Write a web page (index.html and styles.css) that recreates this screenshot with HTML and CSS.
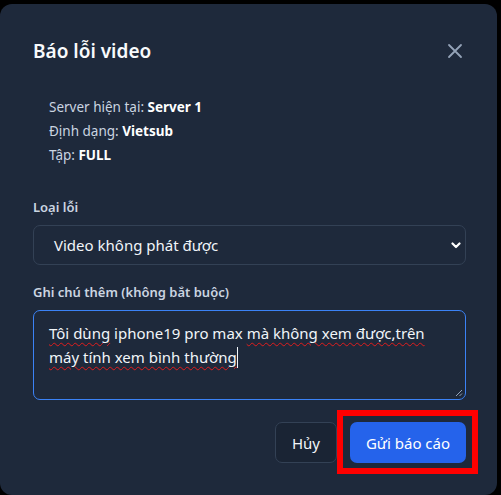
FILE: index.html
```html
<!DOCTYPE html>
<html>
<head>
	<meta charset="UTF-8">
	<title>Báo lỗi video</title>
	<link rel="stylesheet" href="styles.css">
</head>
<body>

<div class="modal">
	<div class="modal-head">
		<h2>Báo lỗi video</h2>
		<button class="close" type="button">
			<svg width="16" height="16" viewBox="0 0 16 16"><path d="M2 2 L14 14 M14 2 L2 14" stroke="#94a3b8" stroke-width="1.8" stroke-linecap="round"/></svg>
		</button>
	</div>

	<div class="info">
		<p>Server hiện tại: <b>Server 1</b></p>
		<p>Định dạng: <b>Vietsub</b></p>
		<p>Tập: <b>FULL</b></p>
	</div>

	<label class="field-label">Loại lỗi</label>
	<div class="select">
		<span>Video không phát được</span>
		<svg width="10" height="7" viewBox="0 0 10 7"><path d="M1.5 1.5 L5 5 L8.5 1.5" fill="none" stroke="#ffffff" stroke-width="2.2" stroke-linecap="round" stroke-linejoin="round"/></svg>
	</div>

	<label class="field-label second">Ghi chú thêm (không bắt buộc)</label>
	<div class="note-wrap">
		<div class="note"><span class="typo">Tôi dùng</span> iphone19 pro max <span class="typo">mà không xem được,trên</span> <span class="typo">máy tính xem bình thường</span><span class="caret"></span></div>
		<svg class="grip" width="8" height="8" viewBox="0 0 8 8"><path d="M7 1 L1 7 M7 4.5 L4.5 7" stroke="#94a3b8" stroke-width="1"/></svg>
	</div>

	<div class="actions">
		<button class="btn cancel" type="button">Hủy</button>
		<div class="mark">
			<button class="btn send" type="button">Gửi báo cáo</button>
		</div>
	</div>
</div>

</body>
</html>
```

FILE: styles.css
```css
body {
	margin: 0;
	background-color: #000000;
	font-family: "Noto Sans", "Open Sans", sans-serif;
	color: #e2e8f0;
}
.modal {
	width: 497px;
	height: 491px;
	box-sizing: border-box;
	margin-top: 4px;
	padding: 33px 31px 0 33px;
	background-color: #1e293b;
	border-radius: 12px;
}
.modal-head {
	display: flex;
	justify-content: space-between;
	align-items: center;
	height: 28px;
}
.modal-head h2 {
	margin: 0;
	font-size: 19px;
	font-weight: 600;
	line-height: 28px;
	color: #f8fafc;
}
.close {
	background: none;
	border: none;
	padding: 0;
	margin-right: 3px;
	width: 16px;
	height: 16px;
	cursor: pointer;
}
.info {
	margin-top: 30px;
	padding-left: 16px;
	font-size: 13.5px;
	color: #cbd5e1;
}
.info p {
	margin: 0;
	line-height: 24px;
}
.info b {
	color: #ffffff;
	font-weight: 700;
}
.field-label {
	display: block;
	margin-top: 30px;
	font-size: 13px;
	font-weight: 600;
	line-height: 20px;
	color: #cbd5e1;
}
.field-label.second {
	margin-top: 17px;
}
.select {
	margin-top: 8px;
	height: 40px;
	box-sizing: border-box;
	border: 1px solid #334155;
	border-radius: 7px;
	padding: 0 4px 0 20px;
	display: flex;
	align-items: center;
	justify-content: space-between;
	font-size: 15px;
	color: #f1f5f9;
}
.note-wrap {
	position: relative;
	margin-top: 8px;
}
.note {
	height: 90px;
	box-sizing: border-box;
	border: 1px solid #3b82f6;
	border-radius: 7px;
	padding: 10px 15px;
	font-size: 15px;
	line-height: 24px;
	color: #f1f5f9;
	overflow: hidden;
}
.grip {
	position: absolute;
	right: 3px;
	bottom: 3px;
}
.typo {
	text-decoration: underline wavy #e11d1d;
	text-decoration-thickness: 1px;
	text-underline-offset: 3px;
}
.caret {
	display: inline-block;
	width: 1px;
	height: 21px;
	vertical-align: -5px;
	background-color: #f1f5f9;
}
.actions {
	margin-top: 22px;
	display: flex;
	justify-content: flex-end;
	gap: 13px;
}
.btn {
	height: 41px;
	border-radius: 7px;
	font-family: inherit;
	font-size: 15px;
	cursor: pointer;
}
.cancel {
	width: 62px;
	background-color: #1a2434;
	border: 1px solid #334155;
	color: #f1f5f9;
}
.mark {
	position: relative;
}
.mark::after {
	content: "";
	position: absolute;
	left: -13px;
	top: -12px;
	width: 141px;
	height: 64px;
	box-sizing: border-box;
	border: 6px solid #ff0000;
}
.send {
	width: 116px;
	background-color: #2563eb;
	border: none;
	color: #ffffff;
}
```
